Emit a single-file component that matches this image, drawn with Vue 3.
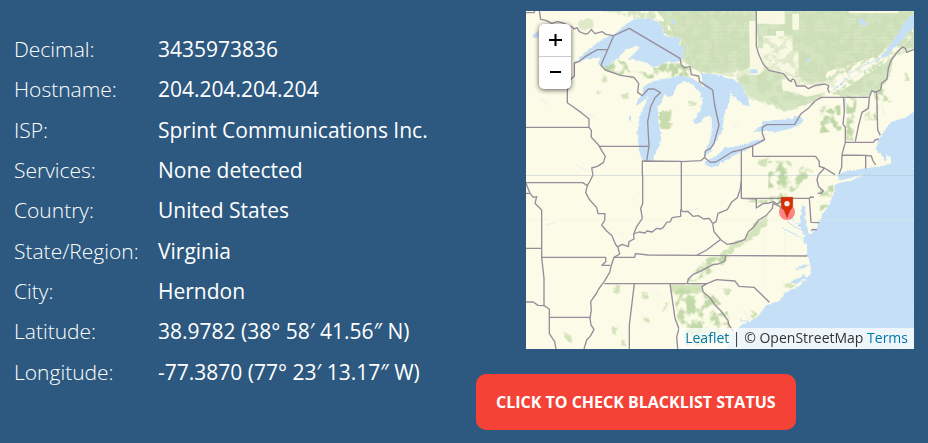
<script setup>
const details = [
  { label: 'Decimal:', value: '3435973836' },
  { label: 'Hostname:', value: '204.204.204.204' },
  { label: 'ISP:', value: 'Sprint Communications Inc.' },
  { label: 'Services:', value: 'None detected' },
  { label: 'Country:', value: 'United States' },
  { label: 'State/Region:', value: 'Virginia' },
  { label: 'City:', value: 'Herndon' },
  { label: 'Latitude:', value: '38.9782 (38° 58′ 41.56″ N)' },
  { label: 'Longitude:', value: '-77.3870 (77° 23′ 13.17″ W)' },
]
</script>

<template>
  <main class="lookup">
    <dl class="details">
      <div v-for="item in details" :key="item.label" class="row">
        <dt>{{ item.label }}</dt>
        <dd>{{ item.value }}</dd>
      </div>
    </dl>

    <section class="side">
      <div class="map">
        <svg class="tiles" viewBox="0 0 1164 1014" preserveAspectRatio="xMidYMid slice" aria-hidden="true">
          <defs>
            <filter id="speckle" x="0" y="0" width="100%" height="100%">
              <feTurbulence type="fractalNoise" baseFrequency="0.035" numOctaves="4" seed="8" result="n" />
              <feColorMatrix in="n" type="matrix" values="0 0 0 0 0 0 0 0 0 0 0 0 0 0 0 0 0 0 -9 5.2" result="m" />
              <feComposite in="SourceGraphic" in2="m" operator="in" />
            </filter>
            <filter id="sparse" x="-10%" y="-10%" width="120%" height="120%">
              <feTurbulence type="fractalNoise" baseFrequency="0.04" numOctaves="4" seed="5" result="n" />
              <feColorMatrix in="n" type="matrix" values="0 0 0 0 0 0 0 0 0 0 0 0 0 0 0 0 0 0 -7 3.9" result="m" />
              <feComposite in="SourceGraphic" in2="m" operator="in" />
            </filter>
            <filter id="rough" x="-10%" y="-10%" width="120%" height="120%">
              <feTurbulence type="fractalNoise" baseFrequency="0.06" numOctaves="3" seed="3" result="n" />
              <feDisplacementMap in="SourceGraphic" in2="n" scale="16" xChannelSelector="R" yChannelSelector="G" />
            </filter>
            <filter id="coast" x="-5%" y="-5%" width="110%" height="110%">
              <feTurbulence type="fractalNoise" baseFrequency="0.09" numOctaves="2" seed="11" result="n" />
              <feDisplacementMap in="SourceGraphic" in2="n" scale="10" xChannelSelector="R" yChannelSelector="G" />
            </filter>
            <pattern id="grain" width="9" height="11" patternUnits="userSpaceOnUse">
              <path d="M1 0V11M0 4H9" stroke="#c3d8aa" stroke-width="2" opacity=".4" />
            </pattern>
          </defs>

          <rect width="1164" height="1014" fill="#fcfbe7" />

          <g transform="translate(-18 -18)">
            <!-- forests -->
            <g filter="url(#rough)">
              <path fill="#d6e5c2" d="M218 8H1190V128L1145 128 1120 165 1105 220 1085 255 1058 262 1040 275 955 272 940 262 975 240 1000 215 1050 190 1085 160 1060 160 1000 195 960 205 930 228 895 232 850 232 835 215 780 212 690 208 688 190 655 198 600 205 540 203 510 185 485 170 478 125 488 105 470 92 430 88 415 50 360 38 325 38 310 30z" />
              <path fill="#d6e5c2" d="M650 218 690 205 790 212 790 255 825 268 855 272 905 262 890 285 830 312 790 318 740 295 700 285 670 260z" />
              <path fill="#d6e5c2" d="M178 44 218 42 218 72 178 74z" opacity=".8" />
              <path fill="#c9dcae" d="M415 322 455 315 452 342 446 350 456 360 446 372 430 372 416 365 425 350 418 340z" />
              <path fill="#cfe1b5" d="M250 210 262 218 256 236 248 230zM230 255 246 256 238 268 228 266zM305 265 326 265 322 284 308 280zM505 290 530 292 528 302 508 300z" opacity=".85" />
              <path fill="#cfe1b5" d="M720 462 740 458 744 480 730 488 712 476zM610 850 632 854 626 872 612 866zM695 915 715 928 700 945 692 935zM285 840 302 842 296 866 282 864zM365 865 384 866 382 884 368 880zM450 882 440 905 425 925 430 908zM368 935 390 938 386 954 372 950zM275 962 292 972 288 988 276 984zM130 980 152 992 158 1015 140 1006zM305 1005 318 1010 314 1022 304 1018zM795 835 825 838 815 850 795 846zM1155 205 1165 205 1165 225 1155 225z" opacity=".9" />
              <path fill="#cde0b3" d="M735 640 745 625 738 660 712 690 680 712 650 725 635 745 600 752 615 735 640 715 670 702 690 680 700 655z" opacity=".85" />
              <path fill="#cfe1b5" d="M452 838H545L552 858 530 868 500 862 480 872 456 862z" opacity=".9" />
            </g>
            <g filter="url(#sparse)">
              <path fill="#bfd7a6" d="M250 165 310 160 330 200 400 200 400 175 480 175 515 195 510 215 470 215 400 220 340 220 255 195zM745 468H815V552H745z" />
              <path fill="#bfd7a6" d="M745 475H800V550H745zM900 305 960 300 965 375 900 385zM980 270 1010 280 1000 405 978 405zM1035 305 1075 300 1070 345 1035 345zM1060 260 1110 250 1115 290 1070 300z" />
              <path fill="#c2d9aa" d="M460 850 560 850 625 920 630 1000 500 1030 470 930zM560 760 640 740 600 790 520 830 500 825zM680 590 760 570 850 480 880 500 780 600zM900 550 940 540 940 590 900 620z" />
            </g>
            <path fill="url(#grain)" d="M840 18H1182V124L1110 140 1080 160 945 225 850 232 835 120zM430 30H688V190H560L490 150 430 80z" />
            <path filter="url(#speckle)" fill="#c6dab0" opacity=".45" d="M410 18H1182V130L1120 160 1070 260 960 265 880 290 800 318 650 220 510 190 480 120 430 80z" />
            <path filter="url(#sparse)" fill="#fcfbe7" d="M230 18 410 18 470 90 400 60 310 40zM920 200 1080 150 1170 40 1182 90 1100 170 960 260 910 260z" />

            <!-- unforested blocks -->
            <path fill="#fcfbe7" d="M710 18H794V58H752V56H710zM687 48H710V90H714V130L740 190 715 210H690zM730 92H768V78H792V92H818V138H836V213H800L740 192 722 160H714V130H730zM817 27H837V74H817zM986 18H1134V25H986zM785 222 820 232 850 248 880 248 920 240 930 256 900 266 860 276 825 262 788 256z" opacity=".9" />
            <path filter="url(#sparse)" fill="#cfe0b8" d="M730 92H836V213H730z" opacity=".6" />

            <!-- lakes and sea -->
            <g fill="#c5dff6" filter="url(#coast)">
              <path d="M162 176 185 150 215 125 262 95 284 88 325 52 345 42 385 38 412 50 428 70 430 90 452 98 476 94 480 106 476 118 490 128 492 148 484 166 462 172 440 172 412 184 395 186 380 172 350 166 326 162 358 130 352 122 322 132 296 156 262 184 244 184 234 176 242 158 205 160z" />
              <path d="M370 244 395 230 420 222 445 222 470 212 500 212 520 222 542 238 560 250 556 258 550 232 542 204 580 208 618 216 642 224 662 240 686 282 688 304 670 300 655 285 630 262 628 290 612 330 606 380 580 420 572 440 554 452 560 425 574 395 576 345 568 332 548 338 540 354 524 356 520 345 540 320 548 290 540 262 518 238 490 228 468 246 458 272 444 276 434 266 424 290 414 304 414 345 424 395 420 420 404 448 396 468 372 470 358 440 352 385 358 340 374 302 384 276 362 294 346 304 354 284 366 272z" />
              <path d="M552 470 586 455 614 430 650 424 694 410 728 400 734 408 700 424 664 440 630 458 600 478 575 488 558 480z" />
              <path d="M700 380 720 365 730 350 765 345 818 342 822 332 845 336 850 348 838 360 808 372 772 380 735 378z" />
              <path d="M1184 26 1160 44 1130 90 1098 138 1080 158 1094 158 1140 112 1184 62z" />
              <path d="M1184 318 1160 336 1130 345 1105 358 1094 378 1080 396 1072 415 1068 436 1088 452 1094 466 1104 462 1098 450 1112 455 1114 474 1092 482 1070 484 1052 488 1010 494 970 500 950 512 960 526 990 520 1032 506 1000 524 958 534 944 540 942 565 932 590 908 628 898 650 890 670 870 690 860 714 862 752 874 790 868 810 840 842 800 860 778 888 740 900 712 936 690 948 662 962 638 985 620 1034H1184z" />
              <path d="M848 600 856 604 856 640 864 680 876 690 864 716 850 715 854 690 838 660 842 630zM868 780 832 796 826 792 860 776zM866 816 826 838 812 832 850 810z" />
            </g>
            <g fill="#c5dff6">
              <path d="M452 44 460 42 466 55 458 60zM328 334 333 332 333 350 326 342zM1014 42 1024 40 1042 56 1036 64 1020 56zM690 194 710 192 714 204 692 206zM970 280 976 282 976 320 972 322zM858 160 866 160 868 172 860 172zM38 90 55 78 55 98 38 98z" />
            </g>
            <!-- upper lake peninsula -->
            <path filter="url(#coast)" fill="#fcfbe7" d="M290 165 322 134 350 122 360 128 332 152 318 170z" />
            <g fill="none" stroke="#c5dff6" stroke-width="3" filter="url(#coast)">
              <path d="M1090 160 1050 172 1000 198 960 240 930 262M800 650 830 668 850 678M785 668 830 690 862 712M808 620 822 650 850 670M660 945 690 950" />
            </g>
            <g fill="none" stroke="#d3e6f5" stroke-width="2" opacity=".8">
              <path d="M628 258 668 266M910 348 940 356M670 915 690 945M985 228 1045 188M63 280 88 300M198 325 223 335M168 480 208 500M335 578 345 590M78 660 108 652M408 860 423 878M498 618 538 610M718 398 748 385M1085 298 1095 335M300 680 310 690M640 370 655 360M870 300 880 290" />
            </g>
            <path d="M18 644H1182M732 640V850M795 680V780" fill="none" stroke="#e7eede" stroke-width="1" />
            <path d="M18 511H1182" stroke="#9fbbc9" stroke-width="2" opacity=".7" />
          </g>

          <!-- boundaries -->
          <g class="borders">
            <g transform="translate(-18 -18)">
              <path d="M18 23H42L44 18M58 18 62 43 78 46 95 55 113 50 130 54 157 66 162 72 171 68 178 80 195 87 204 85 214 74 225 86 246 80 258 88 281 92 328 70 480 160 484 180 493 188 510 185 514 209 536 213 539 230 578 255 584 300 597 360 582 415 572 430 556 438 554 458 571 472 588 471 636 441 665 434 697 423 734 404 727 385 727 368 740 359 824 358 843 326 865 310 885 288 903 277H1048" />
              <path d="M281 92 243 181 256 195 302 211 342 217 356 235 353 262 367 272 385 252 403 252 421 263 405 278 392 305 383 350 387 424 380 468" />
              <path d="M262 134H232L197 154 177 170 163 174V213L151 224 142 255V293L160 306 184 323 207 342V367L214 376V397L235 419 247 440 256 454 250 473 232 484 215 489 219 510M18 367H207M235 424H387M367 511V468L484 469V511M484 470 543 467 554 457" />
            </g>
            <g transform="translate(567 -18)">
              <path d="M463 277 470 258 483 261 497 254 500 235 516 222 520 190 530 163 546 142 563 126 571 130 575 142 597 133" />
              <path d="M124 18V123L131 148 145 178 162 196 205 206 221 225 228 230 232 222 239 225 244 243 270 243 280 251 301 241 330 237 342 243 338 250 343 264M386 277 388 320 384 358 391 366V412H475L480 405 491 402M463 277 460 310 441 322 431 360 421 409M485 260 488 375 496 391M391 412 381 448 380 487 372 507M381 450 452 451 469 453 474 468 482 480M452 453V491M113 421V454H302L313 470 313 484 328 489 360 509M79 433V511M329 489 310 509" />
            </g>
            <g transform="translate(-18 492)">
              <path d="M18 23H188L202 32 210 18 219 0M18 25 30 55H18M30 55 40 67 50 65 45 85 65 105V220H18M65 220V247H257L257 260 246 271H271M65 247 72 310V392L54 391 40 381H18M72 392 88 402V427H212M88 427V476L104 500 108 522" />
              <path d="M202 32 197 52 207 72 230 98 234 116H255L254 136 245 150 260 168 276 182 286 207 294 218 299 237 282 247 274 271 269 292 253 319 236 342 230 354 212 380 214 405 210 430 213 450 222 463 212 482 200 495 192 522M294 215 307 208 325 215 327 200 342 192 341 177 357 171 376 174 380 168 397 171 410 160 422 162 430 157 440 142 451 140 456 128 482 124 482 105 490 110 503 109 519 124 535 122 551 132 568 130 578 146" />
              <path d="M368 0V87L362 100 367 130 350 155 341 177M484 0V108M282 247H344L346 236 385 240 530 241 862 243M530 241 560 225 600 195M253 326H561L590 314 645 318 657 334 702 337 748 382M343 326 328 450V522M450 326 465 430 477 462 470 485 473 522M578 146 582 170 603 195 621 208 645 204 674 194 685 170 702 155 716 135 738 122 757 100 759 85 775 92 789 102M578 146 588 140 594 115 622 104 636 80 652 68 660 45 664 20M617 242 614 258 595 267 580 268 545 287 520 298 505 312 502 325M561 325 546 335 549 350 570 368 585 390 603 408 624 437 626 448 640 470" />
            </g>
            <g transform="translate(567 492)">
              <path d="M79 0V70H283L287 66 297 67M79 70 124 72V99L144 86 162 84 174 80 187 87 199 77 211 90" />
              <path d="M283 70 288 142 313 143M289 168 292 163 306 164M310 0 306 15 311 35 325 48 319 54 308 55" />
            </g>
          </g>

          <!-- located address -->
          <circle cx="783" cy="603" r="24" fill="#ff4c55" opacity=".68" />
          <path d="M766 559H800V583Q800 590 792 598L783 619 775 598Q766 590 766 583z" fill="#d63002" stroke="#c02c0c" stroke-width="2" />
          <circle cx="783" cy="578" r="8" fill="#f5efed" />
        </svg>

        <div class="zoom">
          <button type="button" aria-label="Zoom in">
            <svg viewBox="0 0 14 14"><path d="M7.5 1V13M1 7H14" /></svg>
          </button>
          <button type="button" aria-label="Zoom out">
            <svg viewBox="0 0 14 14"><path d="M2 6H13" /></svg>
          </button>
        </div>

        <p class="credit"><a href="#leaflet">Leaflet</a> | © OpenStreetMap <a href="#terms">Terms</a></p>
      </div>

      <button type="button" class="check">CLICK TO CHECK BLACKLIST STATUS</button>
    </section>
  </main>
</template>

<style>
body {
  margin: 0;
  background: #2d5980;
}
</style>

<style scoped>
.lookup {
  box-sizing: border-box;
  min-height: 100vh;
  display: grid;
  grid-template-columns: minmax(0, 462fr) minmax(0, 438fr);
  padding: 0 14px;
  color: #fff;
  font-family: "Open Sans", "Noto Sans", sans-serif;
}

.details {
  display: grid;
  grid-auto-rows: 1fr;
  margin: 0;
  padding: 29px 0 51px;
  font-size: 21px;
  line-height: 32px;
}

.row {
  display: grid;
  grid-template-columns: 144px 1fr;
  align-items: center;
}

dt {
  font-weight: 300;
}

dd {
  margin: 0;
}

.side {
  display: flex;
  flex-direction: column;
  align-items: flex-start;
  gap: 25px;
  padding: 11px 0 13px;
}

.map {
  position: relative;
  align-self: stretch;
  margin-left: 50px;
  aspect-ratio: 388 / 338;
  overflow: hidden;
}

.tiles {
  display: block;
  width: 100%;
  height: 100%;
}

.borders {
  fill: none;
  stroke: #968d9b;
  stroke-width: 4;
  stroke-linejoin: round;
}

.zoom {
  position: absolute;
  top: 13px;
  left: 13px;
  width: 32px;
  border-radius: 5px;
  background: #fff;
  box-shadow: 0 1px 5px rgba(0, 0, 0, 0.65);
}

.zoom button {
  display: flex;
  align-items: center;
  justify-content: center;
  width: 100%;
  height: 32px;
  padding: 0;
  border: 0;
  background: none;
  cursor: pointer;
}

.zoom button + button {
  height: 33px;
  border-top: 1px solid #ccc;
}

.zoom svg {
  width: 14px;
  height: 14px;
  fill: none;
  stroke: #000;
  stroke-width: 2;
}

.credit {
  position: absolute;
  right: 0;
  bottom: 0;
  margin: 0;
  padding: 0 6px 2px;
  background: rgba(255, 255, 255, 0.7);
  color: #333;
  font-size: 14px;
  line-height: 19px;
  white-space: nowrap;
}

.credit a {
  color: #0078a8;
  text-decoration: none;
}

.check {
  padding: 16px 20px;
  border: 0;
  border-radius: 10px;
  background: #f44336;
  color: #fff;
  font: 700 16px/24px "Open Sans", "Noto Sans", sans-serif;
  white-space: nowrap;
  cursor: pointer;
}
</style>
